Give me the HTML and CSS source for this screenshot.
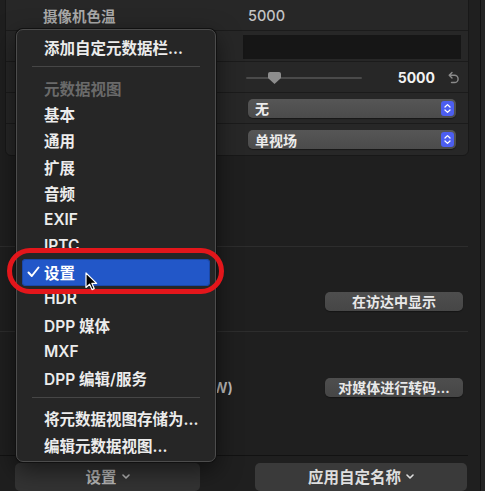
FILE: index.html
```html
<!DOCTYPE html>
<html lang="zh">
<head>
<meta charset="utf-8">
<link rel="stylesheet" href="styles.css">
</head>
<body>
<div class="page">
  <div class="content">
    <div class="panel">
      <div class="row">
        <div class="label">摄像机色温</div>
        <div class="value"><span class="val-text">5000</span></div>
      </div>
      <div class="row">
        <div class="label"></div>
        <div class="value"><div class="field"></div></div>
      </div>
      <div class="row">
        <div class="label"></div>
        <div class="value slider-row">
          <div class="slider">
            <div class="track"></div>
            <svg class="thumb" width="13" height="12" viewBox="0 0 13 12"><path d="M2 0H11A2 2 0 0 1 13 2V6L6.5 12L0 6V2A2 2 0 0 1 2 0Z" fill="#8d8d8d"/></svg>
          </div>
          <span class="num">5000</span>
          <svg class="reset" width="11" height="14" viewBox="0 0 11 14"><path d="M4 1.5L1.2 4.3L4 7.1M1.2 4.3H6.5A3.6 3.6 0 0 1 6.5 11.5H3.5" fill="none" stroke="#8a8a8a" stroke-width="1.4" stroke-linecap="round" stroke-linejoin="round"/></svg>
        </div>
      </div>
      <div class="row">
        <div class="label"></div>
        <div class="value">
          <div class="popup"><span>无</span>
            <svg class="stepper" width="13" height="15" viewBox="0 0 13 15"><rect width="13" height="15" rx="3" fill="#4c5ef0"/><path d="M4 6L6.5 3.6L9 6M4 9L6.5 11.4L9 9" fill="none" stroke="#fff" stroke-width="1.3" stroke-linecap="round" stroke-linejoin="round"/></svg>
          </div>
        </div>
      </div>
      <div class="row last">
        <div class="label"></div>
        <div class="value">
          <div class="popup"><span>单视场</span>
            <svg class="stepper" width="13" height="15" viewBox="0 0 13 15"><rect width="13" height="15" rx="3" fill="#4c5ef0"/><path d="M4 6L6.5 3.6L9 6M4 9L6.5 11.4L9 9" fill="none" stroke="#fff" stroke-width="1.3" stroke-linecap="round" stroke-linejoin="round"/></svg>
          </div>
        </div>
      </div>
    </div>
    <div class="gap"></div>
    <div class="section s1">
      <button class="btn">在访达中显示</button>
    </div>
    <div class="section s2">
      <div class="side-label">媒体 (RAW)</div>
      <button class="btn">对媒体进行转码...</button>
    </div>
    <div class="bottom">
      <button class="bbtn b1">设置<svg class="chev" width="8" height="5" viewBox="0 0 8 5"><path d="M1 1L4 4L7 1" fill="none" stroke="currentColor" stroke-width="1.6" stroke-linecap="round" stroke-linejoin="round"/></svg></button>
      <button class="bbtn b2">应用自定名称<svg class="chev" width="8" height="5" viewBox="0 0 8 5"><path d="M1 1L4 4L7 1" fill="none" stroke="currentColor" stroke-width="1.6" stroke-linecap="round" stroke-linejoin="round"/></svg></button>
    </div>
  </div>
  <div class="edge"></div>

  <div class="menu">
    <div class="item">添加自定元数据栏...</div>
    <div class="sep"></div>
    <div class="item header">元数据视图</div>
    <div class="item">基本</div>
    <div class="item">通用</div>
    <div class="item">扩展</div>
    <div class="item">音频</div>
    <div class="item">EXIF</div>
    <div class="item">IPTC</div>
    <div class="item selected">
      <svg class="check" width="13" height="12" viewBox="0 0 13 12"><path d="M1.5 6.5L4.8 10L11.5 1.5" fill="none" stroke="#fff" stroke-width="2" stroke-linecap="round" stroke-linejoin="round"/></svg>设置</div>
    <div class="item">HDR</div>
    <div class="item">DPP 媒体</div>
    <div class="item">MXF</div>
    <div class="item">DPP 编辑/服务</div>
    <div class="sep"></div>
    <div class="item">将元数据视图存储为...</div>
    <div class="item">编辑元数据视图...</div>
  </div>

  <div class="ring"></div>
  <svg class="cursor" width="13" height="19" viewBox="0 0 13 19"><path d="M1 1V15.5L4.6 12.2L7 17.6L9.2 16.6L6.9 11.4H11.6Z" fill="#000" stroke="#fff" stroke-width="1.2" stroke-linejoin="round"/></svg>
</div>
</body>
</html>
```

FILE: styles.css
```css
* { box-sizing: border-box; }
html, body { margin: 0; padding: 0; }
body {
  background: #1f1f1f;
  font-family: "Inter", "Noto Sans CJK SC", sans-serif;
  color: #e6e6e6;
  width: 485px;
  height: 491px;
  overflow: hidden;
}
.page {
  position: relative;
  width: 485px;
  height: 491px;
  display: flex;
  overflow: hidden;
}
.content {
  width: 480px;
  display: flex;
  flex-direction: column;
}
.edge {
  width: 5px;
  border-left: 1px solid #121212;
  background: #252525;
}

/* inspector panel */
.panel {
  margin: -1px 0 0 5px;
  width: 464px;
  background: #272727;
  border: 1px solid #181818;
  border-radius: 0 0 6px 6px;
}
.row {
  display: flex;
  height: 31px;
  border-bottom: 1px solid #1b1b1b;
}
.row.last { border-bottom: none; }
.label {
  width: 237px;
  padding-left: 37px;
  display: flex;
  align-items: center;
  font-size: 14.5px;
  color: #a9a9a9;
  font-weight: 600;
}
.value {
  flex: 1;
  display: flex;
  align-items: center;
}
.val-text {
  padding-left: 5px;
  font-size: 14.5px;
  color: #c4c4c4;
  font-weight: 500;
}
.field {
  width: 218px;
  height: 24px;
  background: #161616;
  margin-top: 2px;
}
.slider-row { padding-top: 1px; }
.slider {
  position: relative;
  margin-left: 3px;
  width: 116px;
  height: 14px;
  display: flex;
  align-items: center;
}
.track {
  width: 100%;
  height: 2px;
  background: #4a4a4a;
  border-radius: 1px;
}
.thumb {
  position: absolute;
  left: 22px;
  top: 1px;
}
.num {
  margin-left: auto;
  font-size: 14px;
  font-weight: 700;
  color: #f2f2f2;
}
.reset {
  margin: 0 9px 0 13px;
}
.popup {
  margin-left: 5px;
  width: 208px;
  height: 19px;
  border-radius: 5px;
  background: linear-gradient(#565656, #4b4b4b);
  box-shadow: 0 1px 1px rgba(0,0,0,0.4);
  display: flex;
  align-items: center;
  justify-content: space-between;
  padding: 0 2px 0 7px;
  font-size: 14px;
  font-weight: 600;
  color: #ececec;
}

/* lower sections */
.gap {
  height: 93px;
  border-bottom: 1px solid #2d2d2d;
  width: 468px;
}
.section {
  width: 468px;
  display: flex;
  align-items: flex-start;
  border-bottom: 1px solid #2d2d2d;
}
.s1 {
  height: 86px;
  padding-top: 45px;
  justify-content: flex-end;
}
.s2 {
  height: 125px;
  padding-top: 46px;
  border-bottom: 1px solid #121212;
}
.side-label {
  width: 233px;
  text-align: right;
  font-size: 14.5px;
  font-weight: 600;
  color: #bdbdbd;
  line-height: 19px;
}
.btn {
  margin-left: auto;
  margin-right: 5px;
  width: 138px;
  height: 19px;
  border: none;
  border-radius: 5px;
  background: linear-gradient(#4e4e4e, #464646);
  box-shadow: 0 1px 1px rgba(0,0,0,0.35);
  color: #e8e8e8;
  font-family: inherit;
  font-size: 14px;
  font-weight: 600;
  padding: 0;
  line-height: 19px;
}
.bottom {
  flex: 1;
  display: flex;
  align-items: flex-start;
  padding: 7px 0 0 15px;
  gap: 55px;
}
.bbtn {
  height: 28px;
  border: none;
  border-radius: 5px;
  font-family: inherit;
  font-size: 15.5px;
  font-weight: 600;
  display: flex;
  align-items: center;
  justify-content: center;
  gap: 5px;
  padding: 0 0 3px;
}
.b1 {
  width: 185px;
  background: #333333;
  color: #b5b5b5;
}
.b2 {
  width: 212px;
  background: #3a3a3a;
  color: #dedede;
}
.chev { margin-top: 2px; }

/* menu */
.menu {
  position: absolute;
  left: 16px;
  top: 29px;
  width: 200px;
  height: 433px;
  background: #262626;
  border: 1px solid #4c4c4c;
  border-radius: 7px;
  box-shadow: 0 0 0 1px #111, 0 8px 24px rgba(0,0,0,0.55);
  padding: 4px 5px 3px;
}
.item {
  position: relative;
  height: 26.4px;
  padding-left: 22px;
  display: flex;
  align-items: center;
  font-size: 15.5px;
  font-weight: 600;
  color: #ececec;
  white-space: nowrap;
  border-radius: 4px;
}
.item.header { color: #6a6a6a; }
.item.selected {
  background: #2257c8;
  box-shadow: inset 0 0 0 1px #1b48a8;
  color: #fff;
}
.check {
  position: absolute;
  left: 5px;
  top: 7px;
}
.sep {
  height: 14px;
  margin: 0 10px;
  padding-top: 6px;
}
.sep::before {
  content: "";
  display: block;
  height: 1px;
  background: #464646;
}

/* overlays */
.ring {
  position: absolute;
  left: 7px;
  top: 248px;
  width: 217px;
  height: 46px;
  border: 5px solid #e3161b;
  border-radius: 23px;
}
.cursor {
  position: absolute;
  left: 85px;
  top: 272px;
}
```
